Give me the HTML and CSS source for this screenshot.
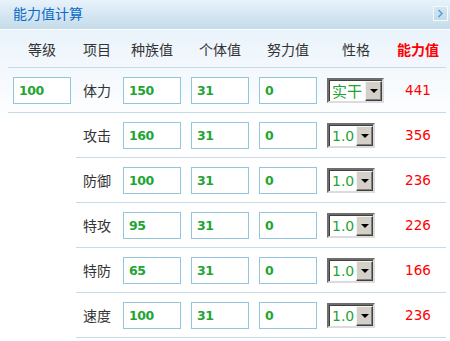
FILE: index.html
```html
<!DOCTYPE html>
<html lang="zh-CN">
<head>
    <meta charset="UTF-8">
    <meta name="viewport" content="width=device-width, initial-scale=1.0">
    <title>能力值计算</title>
    <link rel="stylesheet" href="styles.css">
</head>
<body>
    <div class="panel">
        <div class="panel-head">
            <span class="panel-title">能力值计算</span>
            <span class="toggle">
                <svg width="7" height="9" viewBox="0 0 7 9"><path d="M1.5 1 L5 4.5 L1.5 8" fill="none" stroke="#5b9fd2" stroke-width="1.6"/></svg>
            </span>
        </div>
        <div class="panel-body">
            <table class="calc">
                <colgroup>
                    <col class="c-lv"><col class="c-item"><col class="c-num"><col class="c-num"><col class="c-num"><col class="c-nat"><col class="c-val">
                </colgroup>
                <thead>
                    <tr>
                        <th>等级</th>
                        <th>项目</th>
                        <th>种族值</th>
                        <th>个体值</th>
                        <th>努力值</th>
                        <th>性格</th>
                        <th class="total">能力值</th>
                    </tr>
                </thead>
                <tbody>
                    <tr>
                        <td class="num"><input type="text" value="100"></td>
                        <td class="item">体力</td>
                        <td class="num"><input type="text" value="150"></td>
                        <td class="num"><input type="text" value="31"></td>
                        <td class="num"><input type="text" value="0"></td>
                        <td class="nat"><span class="sel"><span class="sel-val cjk">实干</span><span class="sel-btn"><i></i></span></span></td>
                        <td class="val">441</td>
                    </tr>
                    <tr>
                        <td class="blank" rowspan="5"></td>
                        <td class="item">攻击</td>
                        <td class="num"><input type="text" value="160"></td>
                        <td class="num"><input type="text" value="31"></td>
                        <td class="num"><input type="text" value="0"></td>
                        <td class="nat"><span class="sel"><span class="sel-val">1.0</span><span class="sel-btn"><i></i></span></span></td>
                        <td class="val">356</td>
                    </tr>
                    <tr>
                        <td class="item">防御</td>
                        <td class="num"><input type="text" value="100"></td>
                        <td class="num"><input type="text" value="31"></td>
                        <td class="num"><input type="text" value="0"></td>
                        <td class="nat"><span class="sel"><span class="sel-val">1.0</span><span class="sel-btn"><i></i></span></span></td>
                        <td class="val">236</td>
                    </tr>
                    <tr>
                        <td class="item">特攻</td>
                        <td class="num"><input type="text" value="95"></td>
                        <td class="num"><input type="text" value="31"></td>
                        <td class="num"><input type="text" value="0"></td>
                        <td class="nat"><span class="sel"><span class="sel-val">1.0</span><span class="sel-btn"><i></i></span></span></td>
                        <td class="val">226</td>
                    </tr>
                    <tr>
                        <td class="item">特防</td>
                        <td class="num"><input type="text" value="65"></td>
                        <td class="num"><input type="text" value="31"></td>
                        <td class="num"><input type="text" value="0"></td>
                        <td class="nat"><span class="sel"><span class="sel-val">1.0</span><span class="sel-btn"><i></i></span></span></td>
                        <td class="val">166</td>
                    </tr>
                    <tr>
                        <td class="item">速度</td>
                        <td class="num"><input type="text" value="100"></td>
                        <td class="num"><input type="text" value="31"></td>
                        <td class="num"><input type="text" value="0"></td>
                        <td class="nat"><span class="sel"><span class="sel-val">1.0</span><span class="sel-btn"><i></i></span></span></td>
                        <td class="val">236</td>
                    </tr>
                </tbody>
            </table>
        </div>
    </div>
</body>
</html>
```

FILE: styles.css
```css
/* General */
body {
    margin: 0;
    padding: 0;
    font-family: 'DejaVu Sans', 'Noto Sans CJK SC', sans-serif;
    font-size: 13px;
    color: #333;
    background: #fff;
}

/* Panel */
.panel-head {
    height: 29px;
    display: flex;
    align-items: center;
    justify-content: space-between;
    padding: 0 2px 0 13px;
    background: linear-gradient(#e8f2fb, #c4dbea);
    border-bottom: 1px solid #fff;
}

.panel-title {
    font-family: 'Noto Sans CJK SC', sans-serif;
    font-size: 14px;
    color: #0b6bc9;
    margin-top: -3px;
}

.toggle {
    width: 13px;
    height: 13px;
    margin-top: -3px;
    display: flex;
    align-items: center;
    justify-content: center;
    border: 1px solid #f4f9fd;
    background: linear-gradient(#d4e6f2, #c2dbeb);
}

.panel-body {
    padding: 0 4px 0 8px;
    background: linear-gradient(#eaf3fb, #fff 90px);
}

/* Table */
.calc {
    width: 438px;
    border-collapse: collapse;
    table-layout: fixed;
}

.c-lv { width: 68px; }
.c-item { width: 42px; }
.c-num { width: 68px; }
.c-nat { width: 68px; }
.c-val { width: 56px; }

.calc th {
    height: 37px;
    padding: 0;
    font-family: 'Noto Sans CJK SC', sans-serif;
    font-weight: normal;
    font-size: 14px;
    color: #333;
    border-bottom: 1px solid #c6dae8;
}

.calc th.total {
    color: #f00;
    font-weight: bold;
}

.calc td {
    height: 44px;
    padding: 0;
    text-align: center;
    border-bottom: 1px solid #c6dae8;
}

.calc td.blank {
    border-bottom: none;
}

.calc td.item {
    font-family: 'Noto Sans CJK SC', sans-serif;
    font-size: 14px;
    color: #333;
}

.calc td.nat {
    text-align: left;
    padding-left: 5px;
}

.calc td.val {
    color: #f00;
    font-size: 13.5px;
}

.calc input {
    box-sizing: border-box;
    width: 58px;
    height: 27px;
    margin: 0;
    padding: 0 0 0 5px;
    border: 1px solid #93c5de;
    background: #fff;
    font-family: 'DejaVu Sans', sans-serif;
    font-size: 12.5px;
    font-weight: bold;
    letter-spacing: -0.5px;
    color: #21a532;
    outline: none;
}

/* Fake select */
.sel {
    display: inline-flex;
    vertical-align: middle;
    height: 21px;
    border: 2px solid;
    border-color: #6e6e6e #dcdcdc #dcdcdc #6e6e6e;
    box-shadow: inset 1px 1px 0 #404040;
    background: #fff;
}

.sel-val {
    padding: 0 2px 0 3px;
    line-height: 22px;
    color: #21a532;
    font-family: 'DejaVu Sans', sans-serif;
    font-size: 14px;
}

.sel-val.cjk {
    font-family: 'Noto Sans CJK SC', sans-serif;
    font-size: 15px;
    padding-right: 3px;
}

.sel-btn {
    width: 15px;
    margin: 1px 0 0 0;
    display: flex;
    align-items: center;
    justify-content: center;
    background: #d4d0c8;
    border: 1px solid;
    border-color: #f4f4f0 #404040 #404040 #f4f4f0;
    box-shadow: inset -1px -1px 0 #808080;
}

.sel-btn i {
    width: 0;
    height: 0;
    border-left: 4px solid transparent;
    border-right: 4px solid transparent;
    border-top: 4px solid #000;
}
```
